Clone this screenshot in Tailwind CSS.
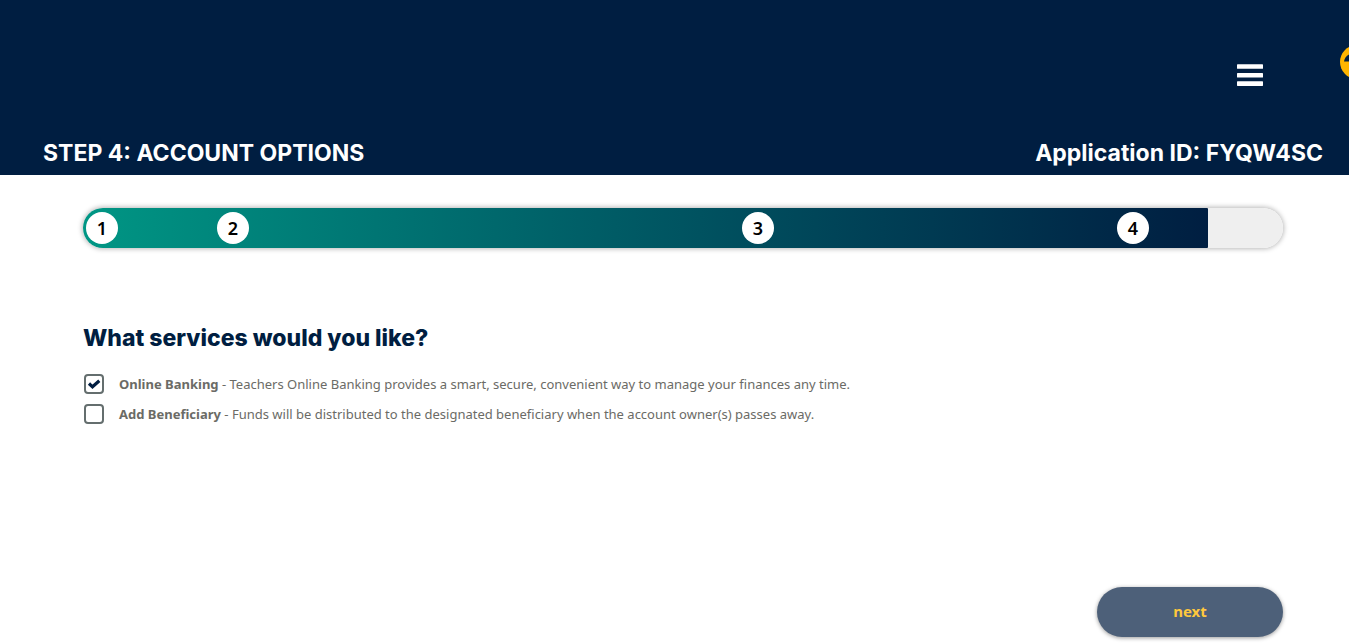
<!DOCTYPE html>
<html lang="en">
<head>
<meta charset="utf-8">
<meta name="viewport" content="width=device-width, initial-scale=1">
<title>Account Options</title>
<script src="https://cdn.jsdelivr.net/npm/@tailwindcss/browser@4"></script>
</head>
<body class="bg-white pr-[17px] font-['Noto_Sans',sans-serif] text-[#6b6b66]">
<header class="relative overflow-hidden bg-[#001e41] pt-[60px] pb-[7px] text-white">
  <div class="flex justify-end pr-[86px]">
    <button type="button" aria-label="Menu" class="flex h-[30px] w-[26px] items-center">
      <svg class="h-[22px] w-[26px]" viewBox="0 0 26 22" fill="#fff"><rect y="0.200" width="26" height="4.600" rx=".6"/><rect y="8.900" width="26" height="4.600" rx=".6"/><rect y="17.300" width="26" height="4.600" rx=".6"/></svg>
    </button>
  </div>
  <a href="#" aria-label="Help" class="absolute top-[45px] -right-[25px] size-[34px]">
    <svg class="size-full" viewBox="0 0 34 34"><circle cx="17" cy="17" r="17" fill="#ffb500"/><path d="M4 16.500C4.500 13 7 9.500 12 8.500V16.500Z" fill="#001e41"/></svg>
  </a>
  <div class="mt-[49px] flex items-center justify-between pr-[26px] pl-[43px] font-['Inter',sans-serif] text-[23px] leading-[29px] font-bold">
    <h1>STEP 4: ACCOUNT OPTIONS</h1>
    <p>Application ID: FYQW4SC</p>
  </div>
</header>
<main class="pt-[33px] pr-[66px] pl-[83px]">
  <div role="progressbar" aria-label="Application progress" aria-valuenow="94" class="rounded-full shadow-[0_0_5px_1px_rgba(0,0,0,0.28)]">
    <div class="relative h-10 overflow-hidden rounded-full bg-[#efefef] text-lg font-semibold text-black">
      <div class="h-full w-[93.75%] rounded-r-[1px] bg-linear-to-r from-[#009684] to-[#001e41]"></div>
      <span class="absolute top-1 left-[3px] flex size-8 items-center justify-center rounded-full bg-white">1</span>
      <span class="absolute top-1 left-[12.5%] flex size-8 -translate-x-1/2 items-center justify-center rounded-full bg-white">2</span>
      <span class="absolute top-1 left-[56.25%] flex size-8 -translate-x-1/2 items-center justify-center rounded-full bg-white">3</span>
      <span class="absolute top-1 left-[87.5%] flex size-8 -translate-x-1/2 items-center justify-center rounded-full bg-white">4</span>
    </div>
  </div>
  <form>
    <fieldset>
      <legend class="pt-[74px] font-['Inter',sans-serif] text-[23px] leading-8 font-extrabold text-[#001e41]">What services would you like?</legend>
      <div class="flex flex-col gap-2.5 pt-5 pl-px text-[13px] leading-5">
        <label class="flex items-center gap-[15px]">
          <span class="relative size-5 shrink-0"><input type="checkbox" checked class="peer block size-5 appearance-none rounded border-2 border-[#646e6e] bg-white"><svg class="pointer-events-none absolute inset-0 hidden size-5 peer-checked:block" viewBox="0 0 20 20" fill="none" stroke="#001e41" stroke-width="3.200"><path d="M5 9.500L8.500 12.800L15.300 6.800"/></svg></span>
          <span><strong>Online Banking</strong> - Teachers Online Banking provides a smart, secure, convenient way to manage your finances any time.</span>
        </label>
        <label class="flex items-center gap-[15px]">
          <span class="relative size-5 shrink-0"><input type="checkbox" class="peer block size-5 appearance-none rounded border-2 border-[#646e6e] bg-white"><svg class="pointer-events-none absolute inset-0 hidden size-5 peer-checked:block" viewBox="0 0 20 20" fill="none" stroke="#001e41" stroke-width="3.200"><path d="M5 9.500L8.500 12.800L15.300 6.800"/></svg></span>
          <span><strong>Add Beneficiary</strong> - Funds will be distributed to the designated beneficiary when the account owner(s) passes away.</span>
        </label>
      </div>
    </fieldset>
    <div class="flex justify-end pt-[163px] pb-1.5">
      <button type="button" class="h-[50px] w-[186px] rounded-full bg-[#4d6079] pb-0.5 text-[15px] font-bold text-[#ffc83d] shadow-[0_1px_4px_rgba(0,0,0,0.4)]">next</button>
    </div>
  </form>
</main>
</body>
</html>
